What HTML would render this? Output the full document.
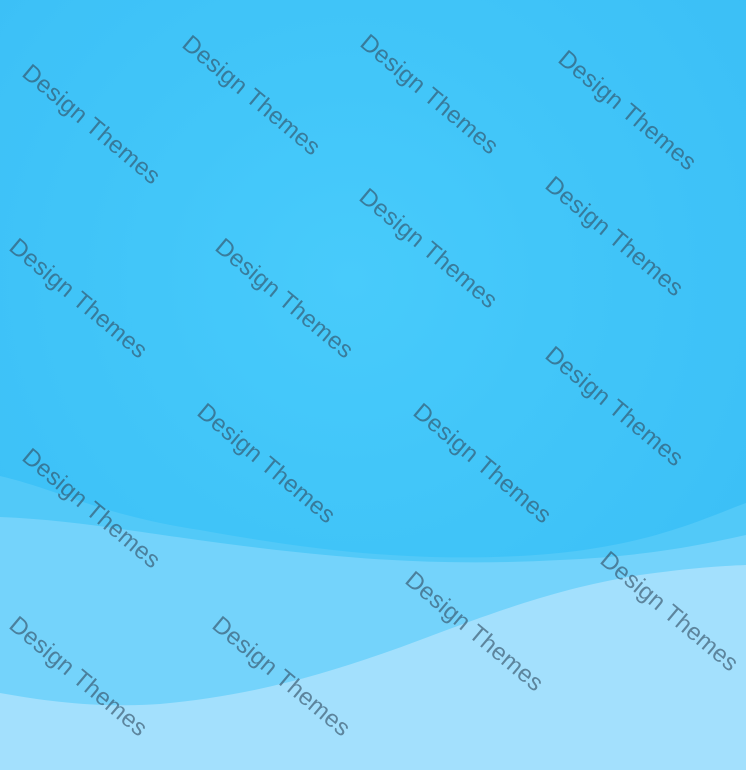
<!DOCTYPE html>
<html><head><meta charset="utf-8"><style>
html,body{margin:0;padding:0;}
body{width:746px;height:770px;overflow:hidden;position:relative;background:radial-gradient(circle at 350px 280px,#48cbfb 0,#42c6f9 200px,#3bbff6 500px);}
svg{position:absolute;left:0;top:0;}
.w{position:absolute;font-family:"Liberation Sans",sans-serif;font-size:24px;color:rgba(50,78,98,0.62);white-space:nowrap;transform:translate(-50%,-50%) rotate(40deg);letter-spacing:0.3px;}
</style></head><body>
<svg width="746" height="770">
<path d="M0,476 C60,490 100,515 200,530 C300,548 400,562 520,556 C640,550 700,520 746,503 L746,770 L0,770Z" fill="#52c9f8"/>
<path d="M0,517 C80,520 150,535 260,548 C360,560 450,566 560,560 C650,556 700,545 746,535 L746,770 L0,770Z" fill="#74d3fb"/>
<path d="M0,693 C50,702 100,708 160,704 C260,695 340,670 420,640 C500,610 560,588 640,575 C690,568 720,566 746,565 L746,770 L0,770Z" fill="#a3e0fd"/>
</svg>
<div class="w" style="left:91px;top:125px">Design Themes</div>
<div class="w" style="left:251px;top:96px">Design Themes</div>
<div class="w" style="left:429px;top:95px">Design Themes</div>
<div class="w" style="left:627px;top:111px">Design Themes</div>
<div class="w" style="left:428px;top:249px">Design Themes</div>
<div class="w" style="left:614px;top:237px">Design Themes</div>
<div class="w" style="left:78px;top:299px">Design Themes</div>
<div class="w" style="left:284px;top:299px">Design Themes</div>
<div class="w" style="left:614px;top:407px">Design Themes</div>
<div class="w" style="left:266px;top:464px">Design Themes</div>
<div class="w" style="left:482px;top:464px">Design Themes</div>
<div class="w" style="left:91px;top:509px">Design Themes</div>
<div class="w" style="left:474px;top:632px">Design Themes</div>
<div class="w" style="left:669px;top:612px">Design Themes</div>
<div class="w" style="left:78px;top:677px">Design Themes</div>
<div class="w" style="left:281px;top:677px">Design Themes</div>
</body></html>
